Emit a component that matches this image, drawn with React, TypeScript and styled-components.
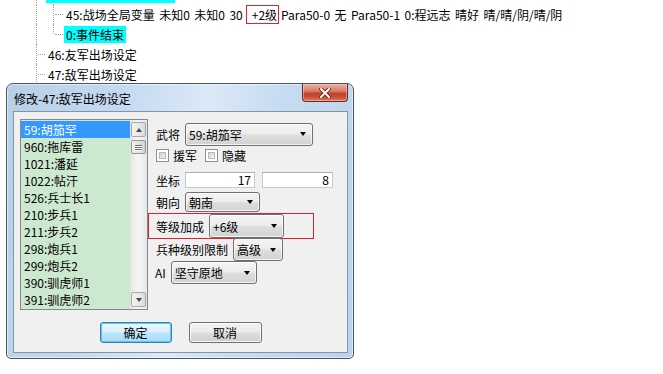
import React from 'react';
import styled, { createGlobalStyle } from 'styled-components';

const GlobalStyle = createGlobalStyle`
  html, body { margin: 0; padding: 0; background: #fff; }
  body {
    font-family: "Noto Sans CJK SC", "Noto Sans", sans-serif;
    font-size: 12px;
    color: #000;
  }
`;

const Desktop = styled.div`
  position: relative;
  width: 663px;
  height: 374px;
  overflow: hidden;
  background: #fff;
`;

/* ---------- tree ---------- */
const Tree = styled.div`
  display: flex;
  flex-direction: column;
  padding-left: 36px;
`;

const TreeRow = styled.div<{ $h?: number; $mt?: number }>`
  display: flex;
  align-items: center;
  height: ${p => p.$h ?? 20}px;
  margin-top: ${p => p.$mt ?? 0}px;
  white-space: nowrap;
`;

type GuideKind = 'pass' | 'tee' | 'end';
const Guide = styled.span<{ $w: number; $kind: GuideKind }>`
  position: relative;
  flex: none;
  width: ${p => p.$w}px;
  align-self: stretch;
  &::before {
    content: '';
    position: absolute;
    left: 0;
    top: 0;
    height: ${p => (p.$kind === 'end' ? '50%' : '100%')};
    border-left: 1px dotted #a0a0a0;
  }
  &::after {
    content: '';
    display: ${p => (p.$kind === 'pass' ? 'none' : 'block')};
    position: absolute;
    left: 2px;
    right: 1px;
    top: 50%;
    border-top: 1px dotted #a0a0a0;
  }
`;

const SelTail = styled.div`
  width: 129px;
  height: 3px;
  background: #00ffff;
`;

const Label = styled.span<{ $sel?: boolean }>`
  display: inline-flex;
  align-items: center;
  height: 17px;
  padding: 0 2px;
  background: ${p => (p.$sel ? '#00ffff' : 'transparent')};
  line-height: 17px;
  word-spacing: 1.8px;
`;

const Marked = styled.span`
  display: inline-block;
  border: 1px solid #ee1c24;
  padding: 0 1px 0 5px;
  line-height: 17px;
  margin: 0 2px 0 3px;
  word-spacing: 0;
`;

/* ---------- window ---------- */
const Window = styled.div`
  position: absolute;
  left: 6px;
  top: 83px;
  width: 348px;
  height: 276px;
  box-sizing: border-box;
  border: 1px solid #4a5563;
  border-radius: 7px 7px 5px 5px;
  background: linear-gradient(100deg, #b8cfe8 0%, #c5daf0 30%, #dbe9f7 52%, #c7dcf1 70%, #bad2ec 100%);
  box-shadow: inset 0 0 0 1px rgba(255, 255, 255, 0.55);
  display: flex;
  flex-direction: column;
  padding: 0 5px 5px 6px;
`;

const TitleBar = styled.div`
  display: flex;
  height: 27px;
  flex: none;
`;

const Title = styled.div`
  flex: 1;
  padding: 6px 0 0 1px;
  line-height: 17px;
  color: #000;
`;

const CloseBtn = styled.div`
  width: 46px;
  height: 18px;
  box-sizing: border-box;
  border: 1px solid #6e2a20;
  border-top: none;
  border-radius: 0 0 4px 4px;
  background: linear-gradient(#eab1a4 0%, #e3a090 15%, #d47561 45%, #c0412b 55%, #c8503a 78%, #dc7c60 100%);
  box-shadow: inset 0 0 0 1px rgba(255, 220, 210, 0.45);
  display: flex;
  align-items: center;
  justify-content: center;
`;

const Client = styled.div`
  flex: 1;
  box-sizing: border-box;
  border: 1px solid #8494a8;
  background: #f0f0f0;
  padding: 7px 6px 0 6px;
  display: flex;
  flex-direction: column;
`;

const Body = styled.div`
  display: flex;
  height: 191px;
`;

/* ---------- list ---------- */
const ListBox = styled.div`
  width: 128px;
  height: 191px;
  box-sizing: border-box;
  border: 1px solid #828790;
  background: #cce8cf;
  display: flex;
  flex: none;
`;

const Items = styled.div`
  flex: 1;
  padding-top: 1px;
  overflow: hidden;
`;

const Item = styled.div<{ $sel?: boolean }>`
  height: 17px;
  line-height: 17px;
  padding-left: 3px;
  background: ${p => (p.$sel ? '#3399ff' : 'transparent')};
  color: ${p => (p.$sel ? '#fff' : '#000')};
  white-space: nowrap;
`;

const ScrollBar = styled.div`
  width: 17px;
  flex: none;
  box-sizing: border-box;
  padding: 2px 1px 2px 1px;
  background: linear-gradient(90deg, #e3e3e3, #f4f4f4 40%, #f4f4f4 60%, #e6e6e6);
  display: flex;
  flex-direction: column;
  justify-content: space-between;
`;

const ScrollTop = styled.div`
  display: flex;
  flex-direction: column;
  gap: 3px;
`;

const SBtn = styled.div`
  height: 15px;
  box-sizing: border-box;
  border: 1px solid #a9a9a9;
  border-radius: 2px;
  background: linear-gradient(90deg, #f3f3f3, #e9e9e9 50%, #d9d9d9);
  display: flex;
  align-items: center;
  justify-content: center;
`;

const Tri = styled.span<{ $up?: boolean }>`
  width: 0;
  height: 0;
  border-left: 3.5px solid transparent;
  border-right: 3.5px solid transparent;
  ${p => (p.$up ? 'border-bottom: 4px solid #4a4a4a;' : 'border-top: 4px solid #4a4a4a;')}
`;

const Thumb = styled.div`
  height: 14px;
  box-sizing: border-box;
  border: 1px solid #979797;
  border-radius: 2px;
  background: linear-gradient(90deg, #f1f1f1, #e2e2e2 50%, #d0d0d0);
  display: flex;
  flex-direction: column;
  align-items: center;
  justify-content: center;
  gap: 1px;
`;

const Grip = styled.span`
  width: 7px;
  height: 1px;
  background: #6a6a6a;
  box-shadow: 0 1px 0 #fff;
`;

/* ---------- right panel ---------- */
const Panel = styled.div`
  flex: 1;
  display: flex;
  flex-direction: column;
  padding-top: 3px;
`;

const Row = styled.div<{ $h: number; $mt?: number; $pl?: number }>`
  display: flex;
  align-items: center;
  height: ${p => p.$h}px;
  margin-top: ${p => p.$mt ?? 0}px;
  padding-left: ${p => p.$pl ?? 8}px;
  gap: 5px;
  white-space: nowrap;
`;

const RedBox = styled.div`
  display: flex;
  align-items: center;
  width: 166px;
  height: 26px;
  box-sizing: border-box;
  border: 1px solid #e0202a;
  padding-left: 7px;
  gap: 5px;
`;

const Combo = styled.div<{ $w: number; $h: number }>`
  box-sizing: border-box;
  width: ${p => p.$w}px;
  height: ${p => p.$h}px;
  flex: none;
  display: flex;
  align-items: center;
  justify-content: space-between;
  padding: 0 6px 0 3px;
  border: 1px solid #707070;
  border-radius: 3px;
  background: linear-gradient(#f4f4f4 0%, #ececec 48%, #dedede 52%, #d3d3d3 100%);
  box-shadow: inset 0 0 0 1px rgba(255, 255, 255, 0.7);
`;

const DropArrow = styled.span`
  width: 0;
  height: 0;
  border-left: 3.5px solid transparent;
  border-right: 3.5px solid transparent;
  border-top: 4px solid #000;
`;

const CheckBox = styled.span`
  width: 13px;
  height: 13px;
  box-sizing: border-box;
  border: 1px solid #8e8f8f;
  background: #fff;
  position: relative;
  flex: none;
  &::after {
    content: '';
    position: absolute;
    inset: 2px;
    background: linear-gradient(135deg, #d0d0d0, #f4f4f4);
    border: 1px solid #b8b8b8;
    box-sizing: border-box;
  }
`;

const CheckGroup = styled.span`
  display: inline-flex;
  align-items: center;
  gap: 4px;
`;

const Checks = styled.div`
  display: flex;
  align-items: center;
  gap: 8px;
`;

const Field = styled.div<{ $w: number }>`
  box-sizing: border-box;
  width: ${p => p.$w}px;
  height: 16px;
  border: 1px solid #c6c9ce;
  border-top-color: #abadb3;
  background: #fff;
  text-align: right;
  padding-right: 3px;
  line-height: 14px;
  flex: none;
`;

const Fields = styled.div`
  display: flex;
  gap: 7px;
`;

/* ---------- buttons ---------- */
const ButtonRow = styled.div`
  display: flex;
  justify-content: center;
  gap: 17px;
  margin-top: 12px;
`;

const Button = styled.div<{ $default?: boolean; $w: number }>`
  width: ${p => p.$w}px;
  height: 21px;
  box-sizing: border-box;
  border: 1px solid ${p => (p.$default ? '#3c7fb1' : '#707070')};
  border-radius: 3px;
  background: ${p =>
    p.$default
      ? 'linear-gradient(#eaf6fd 0%, #d9f0fc 48%, #bee6fd 52%, #a7d9f5 100%)'
      : 'linear-gradient(#f2f2f2 0%, #ebebeb 48%, #dddddd 52%, #cfcfcf 100%)'};
  box-shadow: inset 0 0 0 1px ${p => (p.$default ? '#5ec6f3' : 'rgba(255,255,255,0.8)')};
  display: flex;
  align-items: center;
  justify-content: center;
  line-height: 17px;
`;

const items = [
  '59:胡笳罕', '960:拖库雷', '1021:潘延', '1022:帖汗', '526:兵士长1', '210:步兵1',
  '211:步兵2', '298:炮兵1', '299:炮兵2', '390:驯虎师1', '391:驯虎师2',
];

export default function App() {
  return (
    <Desktop>
      <GlobalStyle />
      <Tree>
        <TreeRow $h={3}>
          <Guide $w={10} $kind="pass" />
          <SelTail />
        </TreeRow>
        <TreeRow $mt={1}>
          <Guide $w={17} $kind="pass" />
          <Guide $w={11} $kind="tee" />
          <Label>
            45:战场全局变量 未知0 未知0 30<Marked>+2级</Marked>Para50-0 无 Para50-1 0:程远志 晴好 晴/晴/阴/晴/阴
          </Label>
        </TreeRow>
        <TreeRow>
          <Guide $w={17} $kind="pass" />
          <Guide $w={11} $kind="end" />
          <Label $sel>0:事件结束</Label>
        </TreeRow>
        <TreeRow>
          <Guide $w={10} $kind="tee" />
          <Label>46:友军出场设定</Label>
        </TreeRow>
        <TreeRow>
          <Guide $w={10} $kind="tee" />
          <Label>47:敌军出场设定</Label>
        </TreeRow>
        <TreeRow>
          <Guide $w={10} $kind="pass" />
        </TreeRow>
      </Tree>

      <Window>
        <TitleBar>
          <Title>修改-47:敌军出场设定</Title>
          <CloseBtn>
            <svg width="12" height="10" viewBox="0 0 12 10">
              <path d="M2 1 L10 9 M10 1 L2 9" stroke="#5a2018" strokeWidth="3.6" strokeLinecap="square" />
              <path d="M2 1 L10 9 M10 1 L2 9" stroke="#ffffff" strokeWidth="2" strokeLinecap="square" />
            </svg>
          </CloseBtn>
        </TitleBar>
        <Client>
          <Body>
            <ListBox>
              <Items>
                {items.map((t, i) => (
                  <Item key={t} $sel={i === 0}>{t}</Item>
                ))}
              </Items>
              <ScrollBar>
                <ScrollTop>
                  <SBtn><Tri $up /></SBtn>
                  <Thumb><Grip /><Grip /><Grip /></Thumb>
                </ScrollTop>
                <SBtn><Tri /></SBtn>
              </ScrollBar>
            </ListBox>
            <Panel>
              <Row $h={24}>
                <span>武将</span>
                <Combo $w={128} $h={23}>
                  <span>59:胡笳罕</span>
                  <DropArrow />
                </Combo>
              </Row>
              <Row $h={18}>
                <Checks>
                  <CheckGroup><CheckBox /><span>援军</span></CheckGroup>
                  <CheckGroup><CheckBox /><span>隐藏</span></CheckGroup>
                </Checks>
              </Row>
              <Row $h={18} $mt={7} $pl={8}>
                <span>坐标</span>
                <Fields>
                  <Field $w={70}>17</Field>
                  <Field $w={71}>8</Field>
                </Fields>
              </Row>
              <Row $h={22} $mt={2}>
                <span>朝向</span>
                <Combo $w={75} $h={20}>
                  <span>朝南</span>
                  <DropArrow />
                </Combo>
              </Row>
              <Row $h={26} $pl={0}>
                <RedBox>
                  <span>等级加成</span>
                  <Combo $w={75} $h={24}>
                    <span>+6级</span>
                    <DropArrow />
                  </Combo>
                </RedBox>
              </Row>
              <Row $h={23} $mt={-1}>
                <span>兵种级别限制</span>
                <Combo $w={50} $h={23}>
                  <span>高级</span>
                  <DropArrow />
                </Combo>
              </Row>
              <Row $h={23} $pl={7}>
                <span>AI</span>
                <Combo $w={86} $h={23}>
                  <span>坚守原地</span>
                  <DropArrow />
                </Combo>
              </Row>
            </Panel>
          </Body>
          <ButtonRow>
            <Button $default $w={72}>确定</Button>
            <Button $w={73}>取消</Button>
          </ButtonRow>
        </Client>
      </Window>
    </Desktop>
  );
}
